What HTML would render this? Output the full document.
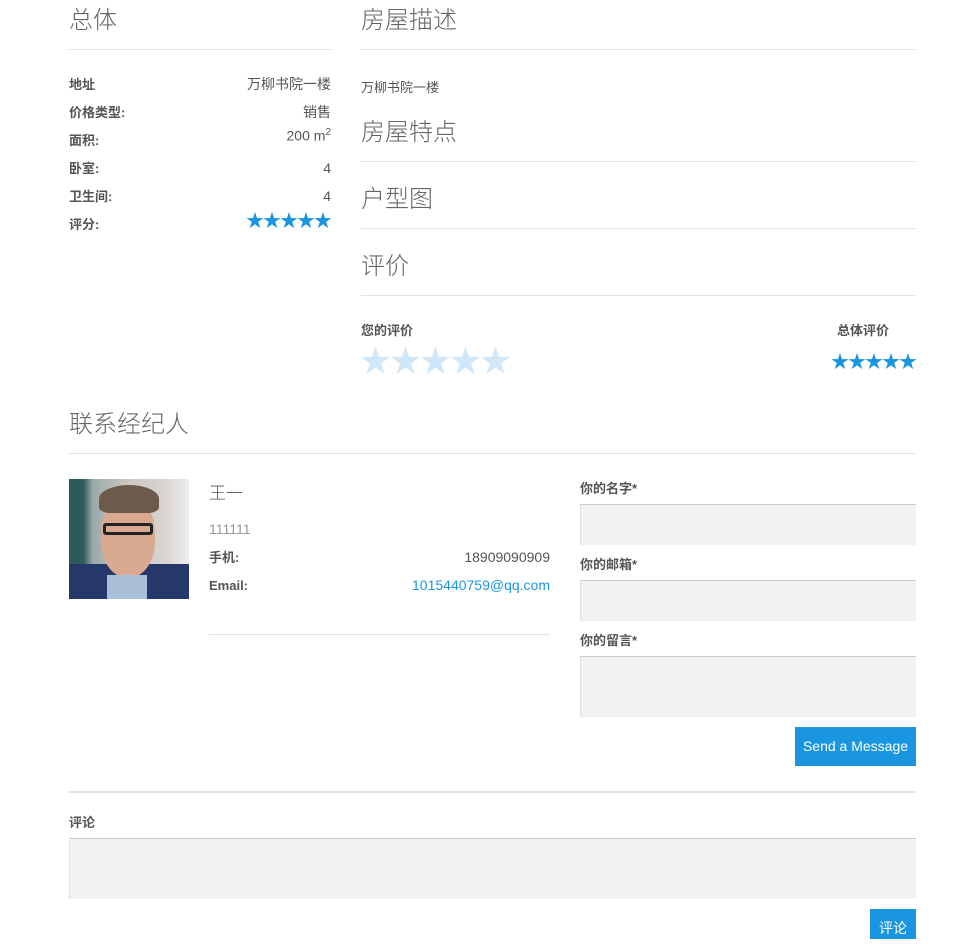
<!DOCTYPE html>
<html><head><meta charset="utf-8"><style>
*{box-sizing:border-box;margin:0;padding:0}
body{width:973px;height:939px;background:#fff;font-family:"Liberation Sans","Noto Sans CJK SC",sans-serif;color:#555;font-size:13px;position:relative;overflow:hidden}
.a{position:absolute}
h2{position:absolute;font-weight:300;font-size:24px;color:#666;line-height:1}
.hr{position:absolute;height:1px;background:#e3e3e3}
.lb{position:absolute;font-weight:bold;font-size:13px;color:#555;line-height:1}
.rv{position:absolute;text-align:right;line-height:1;font-size:14px}
.st{color:#1a96e0;letter-spacing:-1px;font-size:18px;line-height:1}
.inp{position:absolute;background:#f2f2f2;border-top:1px solid #ccc;border-left:1px solid #e0e0e0}
.btn{position:absolute;background:#1a96e0;color:#fff;font-size:14px;text-align:center}
</style></head><body>
<h2 style="left:69px;top:9px">总体</h2>
<div class="hr" style="left:69px;top:49px;width:262px"></div>
<div class="lb" style="left:69px;top:78px">地址</div><div class="rv" style="right:642px;top:77px">万柳书院一楼</div>
<div class="lb" style="left:69px;top:106px">价格类型:</div><div class="rv" style="right:642px;top:105px">销售</div>
<div class="lb" style="left:69px;top:134px">面积:</div><div class="rv" style="right:642px;top:128px">200 m<sup style="font-size:10px">2</sup></div>
<div class="lb" style="left:69px;top:162px">卧室:</div><div class="rv" style="right:642px;top:161px">4</div>
<div class="lb" style="left:69px;top:190px">卫生间:</div><div class="rv" style="right:642px;top:189px">4</div>
<div class="lb" style="left:69px;top:218px">评分:</div><div class="rv st" style="right:642px;top:212px">★★★★★</div>

<h2 style="left:361px;top:9px">房屋描述</h2>
<div class="hr" style="left:361px;top:49px;width:555px"></div>
<div class="a" style="left:361px;top:77px">万柳书院一楼</div>
<h2 style="left:361px;top:121px">房屋特点</h2>
<div class="hr" style="left:361px;top:161px;width:555px"></div>
<h2 style="left:361px;top:188px">户型图</h2>
<div class="hr" style="left:361px;top:228px;width:555px"></div>
<h2 style="left:361px;top:255px">评价</h2>
<div class="hr" style="left:361px;top:295px;width:555px"></div>
<div class="lb" style="left:361px;top:324px">您的评价</div>
<div class="a" style="left:360px;top:346px;font-size:31px;color:#cfe7f8;line-height:1;letter-spacing:-1px">★★★★★</div>
<div class="lb" style="left:837px;top:324px">总体评价</div>
<div class="a st" style="right:57px;top:353px">★★★★★</div>

<h2 style="left:69px;top:413px">联系经纪人</h2>
<div class="hr" style="left:69px;top:453px;width:847px"></div>
<div class="a" style="left:69px;top:479px;width:120px;height:120px;background:linear-gradient(90deg,#2f5a5a 0,#2f5a5a 12%,#9aa 20%,#c9c4be 45%,#d8d4cf 80%,#eee 100%);overflow:hidden">
<div class="a" style="left:0;top:85px;width:120px;height:35px;background:#26386a"></div>
<div class="a" style="left:32px;top:18px;width:54px;height:80px;border-radius:45%;background:#d9aa90"></div>
<div class="a" style="left:30px;top:6px;width:60px;height:28px;border-radius:50% 50% 20% 20%;background:#6e5a4c"></div>
<div class="a" style="left:34px;top:44px;width:50px;height:12px;border:3px solid #222;border-radius:3px"></div>
<div class="a" style="left:38px;top:96px;width:40px;height:24px;background:#a9c0d8"></div>
</div>
<div class="a" style="left:209px;top:479px;font-size:17px;font-weight:300;color:#555">王一</div>
<div class="a" style="left:209px;top:521px;color:#999;font-size:14px">111111</div>
<div class="lb" style="left:209px;top:551px">手机:</div><div class="rv" style="right:423px;top:550px">18909090909</div>
<div class="lb" style="left:209px;top:579px">Email:</div><div class="rv" style="right:423px;top:578px;color:#1a96e0">1015440759@qq.com</div>
<div class="hr" style="left:209px;top:634px;width:341px"></div>

<div class="lb" style="left:580px;top:482px">你的名字*</div>
<div class="inp" style="left:580px;top:504px;width:336px;height:41px"></div>
<div class="lb" style="left:580px;top:558px">你的邮箱*</div>
<div class="inp" style="left:580px;top:580px;width:336px;height:41px"></div>
<div class="lb" style="left:580px;top:634px">你的留言*</div>
<div class="inp" style="left:580px;top:656px;width:336px;height:61px"></div>
<div class="btn" style="left:795px;top:727px;width:121px;height:39px;line-height:39px">Send a Message</div>

<div class="a" style="left:69px;top:791px;width:847px;height:2px;background:#e3e3e3"></div>
<div class="lb" style="left:69px;top:816px">评论</div>
<div class="inp" style="left:69px;top:838px;width:847px;height:61px"></div>
<div class="btn" style="left:870px;top:909px;width:46px;height:30px;line-height:38px;font-size:14px">评论</div>
</body></html>
